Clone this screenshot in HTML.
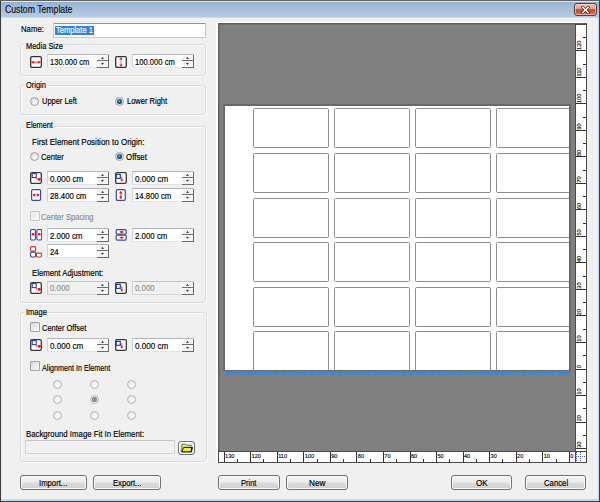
<!DOCTYPE html><html><head><meta charset="utf-8"><title>Custom Template</title><style>
*{margin:0;padding:0;box-sizing:border-box}
html,body{width:600px;height:502px;overflow:hidden;background:#f0f0f0;font-family:"Liberation Sans",sans-serif;color:#111}
.ab{position:absolute}
.t{position:absolute;white-space:nowrap;transform-origin:0 0;height:12px;line-height:12px;-webkit-text-stroke:0.18px currentColor}
.gb{position:absolute;border:1px solid #d9dbdc;border-radius:3px;box-shadow:inset 1px 1px 0 #fdfdfd,1px 1px 0 #fbfbfb}
.gl{position:absolute;background:#f0f0f0;height:9px}
.tb{position:absolute;background:#fff;border:1px solid #e1e5ea;border-top-color:#b2b5ba;border-left-color:#d0d3d8;border-radius:1px}
.tb.dis{background:#f0f0f0;border-color:#d4d4d4;border-top-color:#c4c4c4}
.sp{position:absolute;right:-1px;top:0;width:12px;bottom:-1px;border-right:1px solid #6a6a6a;border-bottom:1px solid #6a6a6a;background:#f7f7f7}
.sp:before{content:"";position:absolute;left:0;right:0;top:5px;height:1.3px;background:#6e6e6e}
.sp i{position:absolute;left:4.5px;width:2px;height:2px;background:#1a1a1a;box-shadow:-2px 0 0 -0.5px #c8c8c8,2px 0 0 -0.5px #c8c8c8}
.rd{position:absolute;width:9px;height:9px;border-radius:50%;border:1px solid #a0a0a0;background:radial-gradient(circle at 60% 65%,#fdfdfd 0,#e8e8e8 45%,#cdcdcd 100%)}
.rd.on:after{content:"";position:absolute;left:1px;top:1px;width:5px;height:5px;border-radius:50%;background:radial-gradient(circle at 45% 40%,#7ad0f4 0,#1e6a9c 30%,#0a3058 75%);}
.rd.dis{border-color:#b4b4b4;background:radial-gradient(circle at 60% 65%,#fafafa 0,#eeeeee 50%,#dedede 100%)}
.rd.dis.on:after{background:radial-gradient(circle,#9a9a9a 0,#7a7a7a 70%)}
.cb{position:absolute;width:10px;height:10px;border:1px solid #a2a2a2;border-radius:1px;background:linear-gradient(135deg,#d8d8d8,#fbfbfb)}
.cb.dis{border-color:#c8c8c8;background:linear-gradient(135deg,#e8e8e8,#f8f8f8)}
.btn{position:absolute;height:15px;border:1px solid #707070;border-radius:3px;background:linear-gradient(#f3f3f3 0,#ebebeb 48%,#dddddd 52%,#cfcfcf 100%);box-shadow:inset 0 0 0 1px #fbfbfb}
.ic{position:absolute;width:12px;height:12px}
.card{position:absolute;border:1px solid #8e8e8e;border-radius:1.5px;background:#fff}
.rl{position:absolute;font-size:5px;line-height:5px;color:#222}
</style></head><body>
<div class="ab" style="left:0;top:0;width:600px;height:502px;border:1px solid #3c3a38;border-top-color:#62625c;border-right-color:#1d4a5e;border-bottom-color:#1d4a5e"></div>
<div class="ab" style="left:1px;top:1px;width:598px;height:17px;background:linear-gradient(#dde8f4 0,#dde8f4 1px,#8ca9cc 1px,#9ab4d3 2px,#aac2de 10px,#b5cce4 16px,#cbd9e9 16px)"></div>
<div class="ab" style="left:1px;top:18px;width:1px;height:482px;background:#e4edf6"></div>
<div class="ab" style="left:598px;top:18px;width:1px;height:482px;background:#c9d9ea"></div>
<div class="ab" style="left:1px;top:499px;width:598px;height:2px;background:#c9d9ea"></div>
<div class="ab" style="left:574px;top:3px;width:23px;height:13px;border:1px solid #4c4248;border-radius:3px;background:linear-gradient(#eeb8a8 0,#e8a490 40%,#d0583c 50%,#c8482c 62%,#dc7a60 100%);box-shadow:inset 0 0 0 1px rgba(255,225,215,.55)"></div>
<svg class="ab" style="left:581px;top:5.5px" width="9" height="8" viewBox="0 0 9 8"><path d="M1.6 1.3 L7.4 6.7 M7.4 1.3 L1.6 6.7" stroke="#3a2a2a" stroke-width="2.8" stroke-linecap="round"/><path d="M1.6 1.3 L7.4 6.7 M7.4 1.3 L1.6 6.7" stroke="#fff" stroke-width="1.5" stroke-linecap="round"/></svg>
<div class="tb" style="left:53px;top:23px;width:153px;height:15px;border-color:#b3cbe3;border-top-color:#7f9cbc"><div class="ab" style="left:1px;top:1.5px;width:39px;height:9px;background:#3580d8"></div></div>
<div class="gb" style="left:20px;top:44px;width:186px;height:32px"></div>
<div class="gl" style="left:24px;top:41px;width:39px"></div>
<svg class="ic" style="left:30px;top:55.5px" width="12" height="12" viewBox="0 0 12 12"><rect x="0.7" y="0.7" width="10.6" height="10.6" rx="1.2" fill="#fff" stroke="#303030" stroke-width="1.3"/><path d="M2.5 6.2H9.5" stroke="#e8101c" stroke-width="0.9"/><path d="M1.3 6.2L3.6 4.4V8Z M10.7 6.2L8.4 4.4V8Z" fill="#e8101c"/></svg>
<div class="tb" style="left:47px;top:54px;width:62px;height:14px"><div class="sp"><svg style="position:absolute;left:0;top:0" width="11" height="12" viewBox="0 0 11 12"><path d="M4.5 3.6H6.5L5.5 2.3Z M4.5 8.2H6.5L5.5 9.5Z" fill="#111" stroke="#111" stroke-width="0.45" stroke-linejoin="round"/><path d="M2 3H3.2M8 3H9.2M2 8.8H3.2M8 8.8H9.2" stroke="#d4d4d4" stroke-width="0.8"/></svg></div></div>
<svg class="ic" style="left:115px;top:55.5px" width="12" height="12" viewBox="0 0 12 12"><rect x="0.7" y="0.7" width="10.6" height="10.6" rx="1.2" fill="#fff" stroke="#303030" stroke-width="1.3"/><path d="M6 2.5V9.5" stroke="#e06070" stroke-width="0.9"/><path d="M6 1.3L4.2 3.6H7.8Z M6 10.7L4.2 8.4H7.8Z" fill="#e8101c"/></svg>
<div class="tb" style="left:132px;top:54px;width:62px;height:14px"><div class="sp"><svg style="position:absolute;left:0;top:0" width="11" height="12" viewBox="0 0 11 12"><path d="M4.5 3.6H6.5L5.5 2.3Z M4.5 8.2H6.5L5.5 9.5Z" fill="#111" stroke="#111" stroke-width="0.45" stroke-linejoin="round"/><path d="M2 3H3.2M8 3H9.2M2 8.8H3.2M8 8.8H9.2" stroke="#d4d4d4" stroke-width="0.8"/></svg></div></div>
<div class="gb" style="left:20px;top:85px;width:186px;height:30px"></div>
<div class="gl" style="left:24px;top:82px;width:22px"></div>
<div class="rd" style="left:30px;top:97px"></div>
<div class="rd on" style="left:115.2px;top:96.9px"></div>
<div class="gb" style="left:20px;top:126px;width:186px;height:177px"></div>
<div class="gl" style="left:24px;top:123px;width:29px"></div>
<div class="rd" style="left:30px;top:152px"></div>
<div class="rd on" style="left:115px;top:152px"></div>
<svg class="ic" style="left:30px;top:172px" width="12" height="12" viewBox="0 0 12 12"><rect x="0.7" y="0.7" width="10.6" height="10.6" rx="1.2" fill="#fff" stroke="#383838" stroke-width="1.3"/><rect x="2.2" y="1.6" width="4" height="4" fill="#fff" stroke="#2a48a8" stroke-width="1.1"/><circle cx="9.2" cy="7.3" r="1.5" fill="#e8101c"/><circle cx="6.6" cy="6.8" r="0.7" fill="#e8101c"/></svg>
<div class="tb" style="left:47px;top:171px;width:62px;height:14px"><div class="sp"><svg style="position:absolute;left:0;top:0" width="11" height="12" viewBox="0 0 11 12"><path d="M4.5 3.6H6.5L5.5 2.3Z M4.5 8.2H6.5L5.5 9.5Z" fill="#111" stroke="#111" stroke-width="0.45" stroke-linejoin="round"/><path d="M2 3H3.2M8 3H9.2M2 8.8H3.2M8 8.8H9.2" stroke="#d4d4d4" stroke-width="0.8"/></svg></div></div>
<svg class="ic" style="left:115px;top:172px" width="12" height="12" viewBox="0 0 12 12"><rect x="0.7" y="0.7" width="10.6" height="10.6" rx="1.2" fill="#fff" stroke="#383838" stroke-width="1.3"/><rect x="1.3" y="2.4" width="4" height="4" fill="#fff" stroke="#2a48a8" stroke-width="1.2"/><path d="M6.8 4.5V8.5" stroke="#e8101c" stroke-width="0.9"/><path d="M5.2 7.6H8.4L6.8 9.8Z" fill="#e8101c"/></svg>
<div class="tb" style="left:132px;top:171px;width:62px;height:14px"><div class="sp"><svg style="position:absolute;left:0;top:0" width="11" height="12" viewBox="0 0 11 12"><path d="M4.5 3.6H6.5L5.5 2.3Z M4.5 8.2H6.5L5.5 9.5Z" fill="#111" stroke="#111" stroke-width="0.45" stroke-linejoin="round"/><path d="M2 3H3.2M8 3H9.2M2 8.8H3.2M8 8.8H9.2" stroke="#d4d4d4" stroke-width="0.8"/></svg></div></div>
<svg class="ic" style="left:30px;top:189px" width="12" height="12" viewBox="0 0 12 12"><rect x="1.6" y="0.6" width="9" height="10.8" rx="1.3" fill="#fff" stroke="#3a4c98" stroke-width="1.2"/><path d="M3.5 6H8.5" stroke="#e85060" stroke-width="1.1"/><path d="M2.3 6L5 4.2V7.8Z M9.9 6L7.2 4.2V7.8Z" fill="#e8101c"/></svg>
<div class="tb" style="left:47px;top:188px;width:62px;height:14px"><div class="sp"><svg style="position:absolute;left:0;top:0" width="11" height="12" viewBox="0 0 11 12"><path d="M4.5 3.6H6.5L5.5 2.3Z M4.5 8.2H6.5L5.5 9.5Z" fill="#111" stroke="#111" stroke-width="0.45" stroke-linejoin="round"/><path d="M2 3H3.2M8 3H9.2M2 8.8H3.2M8 8.8H9.2" stroke="#d4d4d4" stroke-width="0.8"/></svg></div></div>
<svg class="ic" style="left:115px;top:189px" width="12" height="12" viewBox="0 0 12 12"><rect x="1.3" y="0.6" width="9" height="10.8" rx="1.3" fill="#fff" stroke="#3a4c98" stroke-width="1.2"/><path d="M5.8 3V9" stroke="#e85060" stroke-width="1.1"/><path d="M5.8 1.7L4 4.4H7.6Z M5.8 10.3L4 7.6H7.6Z" fill="#e8101c"/></svg>
<div class="tb" style="left:132px;top:188px;width:62px;height:14px"><div class="sp"><svg style="position:absolute;left:0;top:0" width="11" height="12" viewBox="0 0 11 12"><path d="M4.5 3.6H6.5L5.5 2.3Z M4.5 8.2H6.5L5.5 9.5Z" fill="#111" stroke="#111" stroke-width="0.45" stroke-linejoin="round"/><path d="M2 3H3.2M8 3H9.2M2 8.8H3.2M8 8.8H9.2" stroke="#d4d4d4" stroke-width="0.8"/></svg></div></div>
<div class="cb dis" style="left:30px;top:211px"></div>
<svg class="ic" style="left:30px;top:229px" width="12" height="12" viewBox="0 0 12 12"><rect x="0.6" y="0.5" width="4.8" height="10.5" rx="1.2" fill="#fff" stroke="#3a4a9a" stroke-width="1.1"/><rect x="6.9" y="0.5" width="4.8" height="10.5" rx="1.2" fill="#fff" stroke="#3a4a9a" stroke-width="1.1"/><path d="M1.8 5.2H4.4M10.6 5.2H8" stroke="#e8101c" stroke-width="0.8"/><circle cx="3.1" cy="5.2" r="1.2" fill="#e8101c"/><circle cx="9.3" cy="5.2" r="1.2" fill="#e8101c"/></svg>
<div class="tb" style="left:47px;top:228px;width:62px;height:14px"><div class="sp"><svg style="position:absolute;left:0;top:0" width="11" height="12" viewBox="0 0 11 12"><path d="M4.5 3.6H6.5L5.5 2.3Z M4.5 8.2H6.5L5.5 9.5Z" fill="#111" stroke="#111" stroke-width="0.45" stroke-linejoin="round"/><path d="M2 3H3.2M8 3H9.2M2 8.8H3.2M8 8.8H9.2" stroke="#d4d4d4" stroke-width="0.8"/></svg></div></div>
<svg class="ic" style="left:115px;top:229px" width="12" height="12" viewBox="0 0 12 12"><rect x="1.2" y="0.6" width="10" height="4.6" rx="1.2" fill="#fff" stroke="#3a4a9a" stroke-width="1.2"/><rect x="1.2" y="6.2" width="10" height="4.9" rx="1.2" fill="#fff" stroke="#3a4a9a" stroke-width="1.2"/><circle cx="6.6" cy="2.9" r="1.2" fill="#e8101c"/><circle cx="6.6" cy="8.6" r="1.2" fill="#e8101c"/><path d="M4.6 2.9H8.6M4.6 8.6H8.6" stroke="#e8101c" stroke-width="0.7"/></svg>
<div class="tb" style="left:132px;top:228px;width:62px;height:14px"><div class="sp"><svg style="position:absolute;left:0;top:0" width="11" height="12" viewBox="0 0 11 12"><path d="M4.5 3.6H6.5L5.5 2.3Z M4.5 8.2H6.5L5.5 9.5Z" fill="#111" stroke="#111" stroke-width="0.45" stroke-linejoin="round"/><path d="M2 3H3.2M8 3H9.2M2 8.8H3.2M8 8.8H9.2" stroke="#d4d4d4" stroke-width="0.8"/></svg></div></div>
<svg class="ic" style="left:30px;top:245.6px" width="12" height="12" viewBox="0 0 12 12"><rect x="0.6" y="0.6" width="5" height="4.5" rx="1.2" fill="#fff" stroke="#c83a44" stroke-width="1.2"/><rect x="0.6" y="6.1" width="5" height="4.9" rx="1.2" fill="#fff" stroke="#3a4a9a" stroke-width="1.2"/><rect x="6.3" y="7.1" width="5.2" height="3.9" rx="1.2" fill="#fff" stroke="#c83a44" stroke-width="1.2"/></svg>
<div class="tb" style="left:47px;top:244px;width:62px;height:14px"><div class="sp"><svg style="position:absolute;left:0;top:0" width="11" height="12" viewBox="0 0 11 12"><path d="M4.5 3.6H6.5L5.5 2.3Z M4.5 8.2H6.5L5.5 9.5Z" fill="#111" stroke="#111" stroke-width="0.45" stroke-linejoin="round"/><path d="M2 3H3.2M8 3H9.2M2 8.8H3.2M8 8.8H9.2" stroke="#d4d4d4" stroke-width="0.8"/></svg></div></div>
<svg class="ic" style="left:30px;top:282px" width="12" height="12" viewBox="0 0 12 12"><rect x="0.7" y="0.7" width="10.6" height="10.6" rx="1.2" fill="#fff" stroke="#383838" stroke-width="1.3"/><rect x="2.2" y="1.6" width="4" height="4" fill="#fff" stroke="#2a48a8" stroke-width="1.1"/><circle cx="9.2" cy="7.3" r="1.5" fill="#e8101c"/><circle cx="6.6" cy="6.8" r="0.7" fill="#e8101c"/></svg>
<div class="tb dis" style="left:47px;top:281px;width:62px;height:14px"><div class="sp"><svg style="position:absolute;left:0;top:0" width="11" height="12" viewBox="0 0 11 12"><path d="M4.5 3.6H6.5L5.5 2.3Z M4.5 8.2H6.5L5.5 9.5Z" fill="#111" stroke="#111" stroke-width="0.45" stroke-linejoin="round"/><path d="M2 3H3.2M8 3H9.2M2 8.8H3.2M8 8.8H9.2" stroke="#d4d4d4" stroke-width="0.8"/></svg></div></div>
<svg class="ic" style="left:115px;top:282px" width="12" height="12" viewBox="0 0 12 12"><rect x="0.7" y="0.7" width="10.6" height="10.6" rx="1.2" fill="#fff" stroke="#383838" stroke-width="1.3"/><rect x="1.3" y="2.4" width="4" height="4" fill="#fff" stroke="#2a48a8" stroke-width="1.2"/><path d="M6.8 4.5V8.5" stroke="#e8101c" stroke-width="0.9"/><path d="M5.2 7.6H8.4L6.8 9.8Z" fill="#e8101c"/></svg>
<div class="tb dis" style="left:132px;top:281px;width:62px;height:14px"><div class="sp"><svg style="position:absolute;left:0;top:0" width="11" height="12" viewBox="0 0 11 12"><path d="M4.5 3.6H6.5L5.5 2.3Z M4.5 8.2H6.5L5.5 9.5Z" fill="#111" stroke="#111" stroke-width="0.45" stroke-linejoin="round"/><path d="M2 3H3.2M8 3H9.2M2 8.8H3.2M8 8.8H9.2" stroke="#d4d4d4" stroke-width="0.8"/></svg></div></div>
<div class="gb" style="left:20px;top:312px;width:187px;height:150px"></div>
<div class="gl" style="left:24px;top:309px;width:23px"></div>
<div class="cb" style="left:30px;top:322px"></div>
<svg class="ic" style="left:30px;top:339px" width="12" height="12" viewBox="0 0 12 12"><rect x="0.7" y="0.7" width="10.6" height="10.6" rx="1.2" fill="#fff" stroke="#383838" stroke-width="1.3"/><rect x="2.2" y="1.6" width="4" height="4" fill="#fff" stroke="#2a48a8" stroke-width="1.1"/><circle cx="9.2" cy="7.3" r="1.5" fill="#e8101c"/><circle cx="6.6" cy="6.8" r="0.7" fill="#e8101c"/></svg>
<div class="tb" style="left:47px;top:338px;width:62px;height:14px"><div class="sp"><svg style="position:absolute;left:0;top:0" width="11" height="12" viewBox="0 0 11 12"><path d="M4.5 3.6H6.5L5.5 2.3Z M4.5 8.2H6.5L5.5 9.5Z" fill="#111" stroke="#111" stroke-width="0.45" stroke-linejoin="round"/><path d="M2 3H3.2M8 3H9.2M2 8.8H3.2M8 8.8H9.2" stroke="#d4d4d4" stroke-width="0.8"/></svg></div></div>
<svg class="ic" style="left:115px;top:339px" width="12" height="12" viewBox="0 0 12 12"><rect x="0.7" y="0.7" width="10.6" height="10.6" rx="1.2" fill="#fff" stroke="#383838" stroke-width="1.3"/><rect x="1.3" y="2.4" width="4" height="4" fill="#fff" stroke="#2a48a8" stroke-width="1.2"/><path d="M6.8 4.5V8.5" stroke="#e8101c" stroke-width="0.9"/><path d="M5.2 7.6H8.4L6.8 9.8Z" fill="#e8101c"/></svg>
<div class="tb" style="left:132px;top:338px;width:62px;height:14px"><div class="sp"><svg style="position:absolute;left:0;top:0" width="11" height="12" viewBox="0 0 11 12"><path d="M4.5 3.6H6.5L5.5 2.3Z M4.5 8.2H6.5L5.5 9.5Z" fill="#111" stroke="#111" stroke-width="0.45" stroke-linejoin="round"/><path d="M2 3H3.2M8 3H9.2M2 8.8H3.2M8 8.8H9.2" stroke="#d4d4d4" stroke-width="0.8"/></svg></div></div>
<div class="cb" style="left:30px;top:361px"></div>
<div class="rd dis" style="left:52.8px;top:379.8px"></div>
<div class="rd dis" style="left:89.7px;top:379.8px"></div>
<div class="rd dis" style="left:126.8px;top:379.8px"></div>
<div class="rd dis" style="left:52.8px;top:395.0px"></div>
<div class="rd dis on" style="left:89.7px;top:395.0px"></div>
<div class="rd dis" style="left:126.8px;top:395.0px"></div>
<div class="rd dis" style="left:52.8px;top:411.3px"></div>
<div class="rd dis" style="left:89.7px;top:411.3px"></div>
<div class="rd dis" style="left:126.8px;top:411.3px"></div>
<div class="tb dis" style="left:25px;top:440px;width:150px;height:14px"></div>
<div class="btn" style="left:178px;top:441px;width:17px;height:14px;border-color:#707070"></div>
<svg class="ab" style="left:181px;top:443px" width="12" height="10" viewBox="0 0 12 10"><path d="M0.8 1.2 H4.6 L5.6 2.2 H10.2 V8.8 H0.8Z" fill="#e6e4a0" stroke="#6a6a40" stroke-width="0.9"/><path d="M0.8 8.8 L2.6 4.4 H11.6 L10 8.8Z" fill="#eeea50" stroke="#1e1e10" stroke-width="1"/><path d="M10.6 4.6 L10.4 9" stroke="#111" stroke-width="1.2"/></svg>
<div class="btn" style="left:20px;top:475px;width:67px"></div>
<div class="btn" style="left:93px;top:475px;width:68px"></div>
<div class="btn" style="left:218px;top:475px;width:62px"></div>
<div class="btn" style="left:286px;top:475px;width:62px"></div>
<div class="btn" style="left:451px;top:475px;width:61px"></div>
<div class="btn" style="left:525px;top:475px;width:61px"></div>
<div class="ab" style="left:216px;top:22px;width:371px;height:441px;background:#fff"></div>
<div class="ab" style="left:218px;top:23px;width:369px;height:440px;background:#5e5e5e"></div>
<div class="ab" style="left:219px;top:24px;width:356px;height:427px;background:#808080;box-shadow:inset 1px 1px 0 #707070"></div>
<div class="ab" style="left:223px;top:104px;width:348px;height:267px;background:#696969"></div>
<div class="ab" style="left:225px;top:106px;width:344px;height:264px;background:#fff;overflow:hidden">
<div class="card" style="left:28.0px;top:2.3px;width:76px;height:40px"></div>
<div class="card" style="left:108.8px;top:2.3px;width:76px;height:40px"></div>
<div class="card" style="left:189.7px;top:2.3px;width:76px;height:40px"></div>
<div class="card" style="left:270.5px;top:2.3px;width:76px;height:40px"></div>
<div class="card" style="left:28.0px;top:46.9px;width:76px;height:40px"></div>
<div class="card" style="left:108.8px;top:46.9px;width:76px;height:40px"></div>
<div class="card" style="left:189.7px;top:46.9px;width:76px;height:40px"></div>
<div class="card" style="left:270.5px;top:46.9px;width:76px;height:40px"></div>
<div class="card" style="left:28.0px;top:91.5px;width:76px;height:40px"></div>
<div class="card" style="left:108.8px;top:91.5px;width:76px;height:40px"></div>
<div class="card" style="left:189.7px;top:91.5px;width:76px;height:40px"></div>
<div class="card" style="left:270.5px;top:91.5px;width:76px;height:40px"></div>
<div class="card" style="left:28.0px;top:136.1px;width:76px;height:40px"></div>
<div class="card" style="left:108.8px;top:136.1px;width:76px;height:40px"></div>
<div class="card" style="left:189.7px;top:136.1px;width:76px;height:40px"></div>
<div class="card" style="left:270.5px;top:136.1px;width:76px;height:40px"></div>
<div class="card" style="left:28.0px;top:180.7px;width:76px;height:40px"></div>
<div class="card" style="left:108.8px;top:180.7px;width:76px;height:40px"></div>
<div class="card" style="left:189.7px;top:180.7px;width:76px;height:40px"></div>
<div class="card" style="left:270.5px;top:180.7px;width:76px;height:40px"></div>
<div class="card" style="left:28.0px;top:225.3px;width:76px;height:40px"></div>
<div class="card" style="left:108.8px;top:225.3px;width:76px;height:40px"></div>
<div class="card" style="left:189.7px;top:225.3px;width:76px;height:40px"></div>
<div class="card" style="left:270.5px;top:225.3px;width:76px;height:40px"></div>
</div>
<svg class="ab" style="left:226px;top:371px" width="345" height="6" viewBox="0 0 345 6"><path d="M0 0 H345 V2.2 L351.08 2.2 L347.54 5 L344.01 2.2 L340.47 5 L336.94 2.2 L333.40 5 L329.87 2.2 L326.33 5 L322.80 2.2 L319.26 5 L315.73 2.2 L312.19 5 L308.66 2.2 L305.12 5 L301.59 2.2 L298.05 5 L294.52 2.2 L290.98 5 L287.45 2.2 L283.91 5 L280.38 2.2 L276.84 5 L273.31 2.2 L269.77 5 L266.24 2.2 L262.70 5 L259.17 2.2 L255.63 5 L252.10 2.2 L248.56 5 L245.03 2.2 L241.49 5 L237.96 2.2 L234.42 5 L230.89 2.2 L227.35 5 L223.82 2.2 L220.28 5 L216.75 2.2 L213.21 5 L209.68 2.2 L206.14 5 L202.61 2.2 L199.07 5 L195.54 2.2 L192.00 5 L188.47 2.2 L184.93 5 L181.40 2.2 L177.86 5 L174.33 2.2 L170.79 5 L167.26 2.2 L163.72 5 L160.19 2.2 L156.65 5 L153.12 2.2 L149.58 5 L146.05 2.2 L142.51 5 L138.98 2.2 L135.44 5 L131.91 2.2 L128.37 5 L124.84 2.2 L121.30 5 L117.77 2.2 L114.23 5 L110.70 2.2 L107.16 5 L103.63 2.2 L100.09 5 L96.56 2.2 L93.02 5 L89.49 2.2 L85.95 5 L82.42 2.2 L78.88 5 L75.35 2.2 L71.81 5 L68.28 2.2 L64.75 5 L61.21 2.2 L57.67 5 L54.14 2.2 L50.61 5 L47.07 2.2 L43.53 5 L40.00 2.2 L36.47 5 L32.93 2.2 L29.39 5 L25.86 2.2 L22.32 5 L18.79 2.2 L15.25 5 L11.72 2.2 L8.18 5 L4.65 2.2 L1.11 5 L-2.42 2.2 L-5.96 5 L0 2.2 Z" fill="#3a86d8" fill-opacity="0.85"/><rect x="0" y="0" width="345" height="2.2" fill="#3a86d8"/></svg>
<div class="ab" style="left:575px;top:24px;width:12px;height:428px;background:#fff;border-left:1px solid #4a4a4a;border-right:1px solid #4a4a4a;border-top:1px solid #4a4a4a"></div>
<div class="ab" style="left:218px;top:451px;width:358px;height:12px;background:#fff;border-top:1px solid #4a4a4a;border-bottom:1px solid #4a4a4a;border-left:1px solid #4a4a4a"></div>
<div class="ab" style="left:575px;top:451px;width:12px;height:12px;background:#fff;border:1px solid #4a4a4a"></div>
<svg class="ab" style="left:576px;top:452px" width="10" height="10"><path d="M0 4.5H10M4.5 0V10M0.5 0V10" stroke="#4a5ad0" stroke-width="1" stroke-dasharray="1 1"/></svg>
<svg class="ab" style="left:0;top:0" width="600" height="502" viewBox="0 0 600 502" shape-rendering="crispEdges"><rect x="568.80" y="452" width="1" height="10" fill="#333"/><rect x="555.52" y="459" width="1" height="3" fill="#333"/><rect x="542.25" y="452" width="1" height="10" fill="#333"/><rect x="528.98" y="459" width="1" height="3" fill="#333"/><rect x="515.70" y="452" width="1" height="10" fill="#333"/><rect x="502.42" y="459" width="1" height="3" fill="#333"/><rect x="489.15" y="452" width="1" height="10" fill="#333"/><rect x="475.88" y="459" width="1" height="3" fill="#333"/><rect x="462.60" y="452" width="1" height="10" fill="#333"/><rect x="449.32" y="459" width="1" height="3" fill="#333"/><rect x="436.05" y="452" width="1" height="10" fill="#333"/><rect x="422.77" y="459" width="1" height="3" fill="#333"/><rect x="409.50" y="452" width="1" height="10" fill="#333"/><rect x="396.22" y="459" width="1" height="3" fill="#333"/><rect x="382.95" y="452" width="1" height="10" fill="#333"/><rect x="369.67" y="459" width="1" height="3" fill="#333"/><rect x="356.40" y="452" width="1" height="10" fill="#333"/><rect x="343.12" y="459" width="1" height="3" fill="#333"/><rect x="329.85" y="452" width="1" height="10" fill="#333"/><rect x="316.57" y="459" width="1" height="3" fill="#333"/><rect x="303.30" y="452" width="1" height="10" fill="#333"/><rect x="290.02" y="459" width="1" height="3" fill="#333"/><rect x="276.75" y="452" width="1" height="10" fill="#333"/><rect x="263.47" y="459" width="1" height="3" fill="#333"/><rect x="250.20" y="452" width="1" height="10" fill="#333"/><rect x="236.92" y="459" width="1" height="3" fill="#333"/><rect x="223.65" y="452" width="1" height="10" fill="#333"/><rect x="576" y="448.06" width="10" height="1" fill="#333"/><rect x="576" y="421.54" width="10" height="1" fill="#333"/><rect x="576" y="395.02" width="10" height="1" fill="#333"/><rect x="576" y="368.50" width="10" height="1" fill="#333"/><rect x="576" y="341.98" width="10" height="1" fill="#333"/><rect x="576" y="315.46" width="10" height="1" fill="#333"/><rect x="576" y="288.94" width="10" height="1" fill="#333"/><rect x="576" y="262.42" width="10" height="1" fill="#333"/><rect x="576" y="235.90" width="10" height="1" fill="#333"/><rect x="576" y="209.38" width="10" height="1" fill="#333"/><rect x="576" y="182.86" width="10" height="1" fill="#333"/><rect x="576" y="156.34" width="10" height="1" fill="#333"/><rect x="576" y="129.82" width="10" height="1" fill="#333"/><rect x="576" y="103.30" width="10" height="1" fill="#333"/><rect x="576" y="76.78" width="10" height="1" fill="#333"/><rect x="576" y="50.26" width="10" height="1" fill="#333"/><rect x="583" y="434.80" width="3" height="1" fill="#333"/><rect x="583" y="408.28" width="3" height="1" fill="#333"/><rect x="583" y="381.76" width="3" height="1" fill="#333"/><rect x="583" y="355.24" width="3" height="1" fill="#333"/><rect x="583" y="328.72" width="3" height="1" fill="#333"/><rect x="583" y="302.20" width="3" height="1" fill="#333"/><rect x="583" y="275.68" width="3" height="1" fill="#333"/><rect x="583" y="249.16" width="3" height="1" fill="#333"/><rect x="583" y="222.64" width="3" height="1" fill="#333"/><rect x="583" y="196.12" width="3" height="1" fill="#333"/><rect x="583" y="169.60" width="3" height="1" fill="#333"/><rect x="583" y="143.08" width="3" height="1" fill="#333"/><rect x="583" y="116.56" width="3" height="1" fill="#333"/><rect x="583" y="90.04" width="3" height="1" fill="#333"/><rect x="583" y="63.52" width="3" height="1" fill="#333"/><rect x="583" y="37.00" width="3" height="1" fill="#333"/></svg>
<svg class="ab" style="left:0;top:0" width="600" height="502" viewBox="0 0 600 502"><text x="570.20" y="458" font-size="5.6" fill="#111" stroke="#111" stroke-width="0.15" font-family="Liberation Sans">0</text><text x="543.65" y="458" font-size="5.6" fill="#111" stroke="#111" stroke-width="0.15" font-family="Liberation Sans">10</text><text x="517.10" y="458" font-size="5.6" fill="#111" stroke="#111" stroke-width="0.15" font-family="Liberation Sans">20</text><text x="490.55" y="458" font-size="5.6" fill="#111" stroke="#111" stroke-width="0.15" font-family="Liberation Sans">30</text><text x="464.00" y="458" font-size="5.6" fill="#111" stroke="#111" stroke-width="0.15" font-family="Liberation Sans">40</text><text x="437.45" y="458" font-size="5.6" fill="#111" stroke="#111" stroke-width="0.15" font-family="Liberation Sans">50</text><text x="410.90" y="458" font-size="5.6" fill="#111" stroke="#111" stroke-width="0.15" font-family="Liberation Sans">60</text><text x="384.35" y="458" font-size="5.6" fill="#111" stroke="#111" stroke-width="0.15" font-family="Liberation Sans">70</text><text x="357.80" y="458" font-size="5.6" fill="#111" stroke="#111" stroke-width="0.15" font-family="Liberation Sans">80</text><text x="331.25" y="458" font-size="5.6" fill="#111" stroke="#111" stroke-width="0.15" font-family="Liberation Sans">90</text><text x="304.70" y="458" font-size="5.6" fill="#111" stroke="#111" stroke-width="0.15" font-family="Liberation Sans">100</text><text x="278.15" y="458" font-size="5.6" fill="#111" stroke="#111" stroke-width="0.15" font-family="Liberation Sans">110</text><text x="251.60" y="458" font-size="5.6" fill="#111" stroke="#111" stroke-width="0.15" font-family="Liberation Sans">120</text><text x="225.05" y="458" font-size="5.6" fill="#111" stroke="#111" stroke-width="0.15" font-family="Liberation Sans">130</text><text transform="translate(581.4 447.76) rotate(-90)" font-size="5.6" fill="#111" stroke="#111" stroke-width="0.15" font-family="Liberation Sans">30</text><text transform="translate(581.4 421.24) rotate(-90)" font-size="5.6" fill="#111" stroke="#111" stroke-width="0.15" font-family="Liberation Sans">20</text><text transform="translate(581.4 394.72) rotate(-90)" font-size="5.6" fill="#111" stroke="#111" stroke-width="0.15" font-family="Liberation Sans">10</text><text transform="translate(581.4 368.20) rotate(-90)" font-size="5.6" fill="#111" stroke="#111" stroke-width="0.15" font-family="Liberation Sans">0</text><text transform="translate(581.4 341.68) rotate(-90)" font-size="5.6" fill="#111" stroke="#111" stroke-width="0.15" font-family="Liberation Sans">10</text><text transform="translate(581.4 315.16) rotate(-90)" font-size="5.6" fill="#111" stroke="#111" stroke-width="0.15" font-family="Liberation Sans">20</text><text transform="translate(581.4 288.64) rotate(-90)" font-size="5.6" fill="#111" stroke="#111" stroke-width="0.15" font-family="Liberation Sans">30</text><text transform="translate(581.4 262.12) rotate(-90)" font-size="5.6" fill="#111" stroke="#111" stroke-width="0.15" font-family="Liberation Sans">40</text><text transform="translate(581.4 235.60) rotate(-90)" font-size="5.6" fill="#111" stroke="#111" stroke-width="0.15" font-family="Liberation Sans">50</text><text transform="translate(581.4 209.08) rotate(-90)" font-size="5.6" fill="#111" stroke="#111" stroke-width="0.15" font-family="Liberation Sans">60</text><text transform="translate(581.4 182.56) rotate(-90)" font-size="5.6" fill="#111" stroke="#111" stroke-width="0.15" font-family="Liberation Sans">70</text><text transform="translate(581.4 156.04) rotate(-90)" font-size="5.6" fill="#111" stroke="#111" stroke-width="0.15" font-family="Liberation Sans">80</text><text transform="translate(581.4 129.52) rotate(-90)" font-size="5.6" fill="#111" stroke="#111" stroke-width="0.15" font-family="Liberation Sans">90</text><text transform="translate(581.4 103.00) rotate(-90)" font-size="5.6" fill="#111" stroke="#111" stroke-width="0.15" font-family="Liberation Sans">100</text><text transform="translate(581.4 76.48) rotate(-90)" font-size="5.6" fill="#111" stroke="#111" stroke-width="0.15" font-family="Liberation Sans">110</text><text transform="translate(581.4 49.96) rotate(-90)" font-size="5.6" fill="#111" stroke="#111" stroke-width="0.15" font-family="Liberation Sans">120</text></svg>
<div class="t" style="left:4.6px;top:4.1px;font-size:10.1px;color:#101018;transform:scaleX(0.860)">Custom Template</div>
<div class="t" style="left:20.6px;top:22.8px;font-size:9.9px;color:#000;transform:scaleX(0.787)">Name:</div>
<div class="t" style="left:55.8px;top:23.7px;font-size:9.9px;color:#f4f8ff;transform:scaleX(0.764)">Template 1</div>
<div class="t" style="left:25.6px;top:39.6px;font-size:9.9px;color:#000;transform:scaleX(0.755)">Media Size</div>
<div class="t" style="left:50.0px;top:56.1px;font-size:9.9px;color:#000;transform:scaleX(0.763)">130.000 cm</div>
<div class="t" style="left:135.0px;top:56.1px;font-size:9.9px;color:#000;transform:scaleX(0.773)">100.000 cm</div>
<div class="t" style="left:25.6px;top:79.3px;font-size:9.9px;color:#000;transform:scaleX(0.755)">Origin</div>
<div class="t" style="left:41.9px;top:95.3px;font-size:9.9px;color:#000;transform:scaleX(0.757)">Upper Left</div>
<div class="t" style="left:126.7px;top:95.3px;font-size:9.9px;color:#000;transform:scaleX(0.761)">Lower Right</div>
<div class="t" style="left:25.6px;top:119.3px;font-size:9.9px;color:#000;transform:scaleX(0.742)">Element</div>
<div class="t" style="left:32.2px;top:135.9px;font-size:9.9px;color:#000;transform:scaleX(0.810)">First Element Position to Origin:</div>
<div class="t" style="left:40.9px;top:151.0px;font-size:9.9px;color:#000;transform:scaleX(0.773)">Center</div>
<div class="t" style="left:125.6px;top:151.0px;font-size:9.9px;color:#000;transform:scaleX(0.799)">Offset</div>
<div class="t" style="left:50.0px;top:173.1px;font-size:9.9px;color:#000;transform:scaleX(0.820)">0.000 cm</div>
<div class="t" style="left:135.0px;top:173.1px;font-size:9.9px;color:#000;transform:scaleX(0.820)">0.000 cm</div>
<div class="t" style="left:50.0px;top:190.1px;font-size:9.9px;color:#000;transform:scaleX(0.787)">28.400 cm</div>
<div class="t" style="left:135.0px;top:190.1px;font-size:9.9px;color:#000;transform:scaleX(0.787)">14.800 cm</div>
<div class="t" style="left:41.1px;top:211.0px;font-size:9.9px;color:#8d8d8d;transform:scaleX(0.770)">Center Spacing</div>
<div class="t" style="left:50.0px;top:230.1px;font-size:9.9px;color:#000;transform:scaleX(0.798)">2.000 cm</div>
<div class="t" style="left:135.0px;top:230.1px;font-size:9.9px;color:#000;transform:scaleX(0.798)">2.000 cm</div>
<div class="t" style="left:50.0px;top:246.1px;font-size:9.9px;color:#000;transform:scaleX(0.792)">24</div>
<div class="t" style="left:32.1px;top:266.6px;font-size:9.9px;color:#000;transform:scaleX(0.787)">Element Adjustment:</div>
<div class="t" style="left:50.0px;top:282.2px;font-size:9.9px;color:#8f8f8f;transform:scaleX(0.793)">0.000</div>
<div class="t" style="left:135.0px;top:282.2px;font-size:9.9px;color:#8f8f8f;transform:scaleX(0.793)">0.000</div>
<div class="t" style="left:25.6px;top:306.4px;font-size:9.9px;color:#000;transform:scaleX(0.761)">Image</div>
<div class="t" style="left:41.5px;top:321.6px;font-size:9.9px;color:#000;transform:scaleX(0.757)">Center Offset</div>
<div class="t" style="left:50.0px;top:340.1px;font-size:9.9px;color:#000;transform:scaleX(0.820)">0.000 cm</div>
<div class="t" style="left:135.0px;top:340.1px;font-size:9.9px;color:#000;transform:scaleX(0.820)">0.000 cm</div>
<div class="t" style="left:42.3px;top:361.6px;font-size:9.9px;color:#000;transform:scaleX(0.728)">Alignment In Element</div>
<div class="t" style="left:26.1px;top:428.1px;font-size:9.9px;color:#000;transform:scaleX(0.791)">Background Image Fit In Element:</div>
<div class="t" style="left:39.4px;top:476.8px;font-size:9.9px;color:#000;transform:scaleX(0.781)">Import...</div>
<div class="t" style="left:112.8px;top:476.8px;font-size:9.9px;color:#000;transform:scaleX(0.775)">Export...</div>
<div class="t" style="left:241.3px;top:476.8px;font-size:9.9px;color:#000;transform:scaleX(0.758)">Print</div>
<div class="t" style="left:308.9px;top:476.8px;font-size:9.9px;color:#000;transform:scaleX(0.830)">New</div>
<div class="t" style="left:475.8px;top:476.8px;font-size:9.9px;color:#000;transform:scaleX(0.812)">OK</div>
<div class="t" style="left:543.5px;top:476.8px;font-size:9.9px;color:#000;transform:scaleX(0.784)">Cancel</div>
</body></html>
